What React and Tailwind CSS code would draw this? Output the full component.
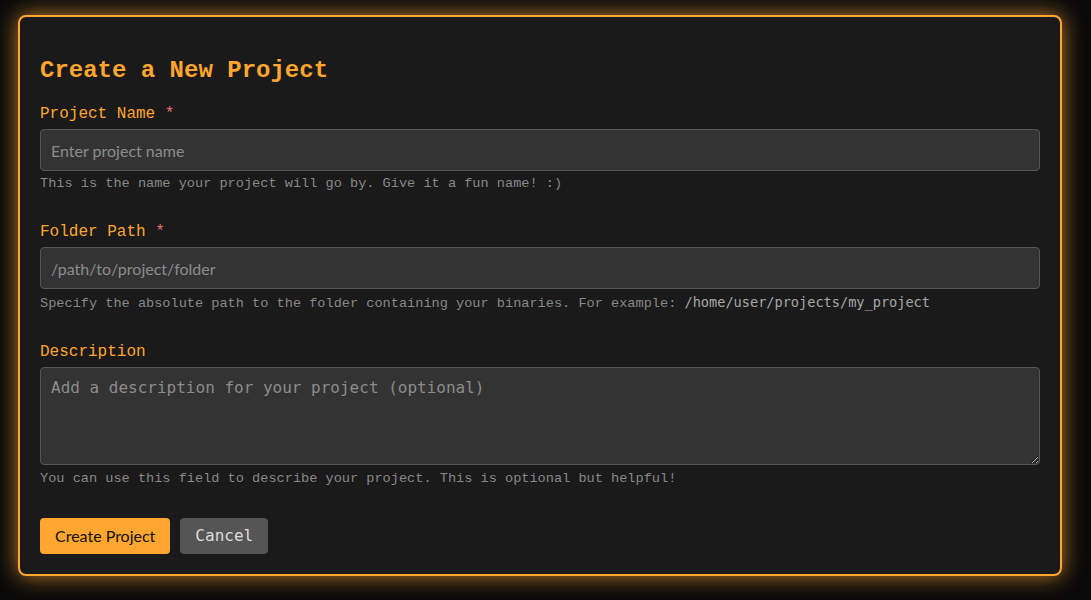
import React, { useState } from 'react';

const mono = "font-['Liberation_Mono',monospace]";
const dejavu = "font-['DejaVu_Sans_Mono',monospace]";

const Field = ({ label, required, children, hint, hintGap = 'mt-[5px]' }) => (
  <div className="mb-[31px]">
    <label className={`block ${mono} text-[16px] leading-[18px] text-[#ffa630] mb-[6px]`}>
      {label}
      {required && <span className="text-[#e57373]"> *</span>}
    </label>
    {children}
    <p className={`${mono} text-[13.6px] leading-[16px] text-[#888] ${hintGap}`}>{hint}</p>
  </div>
);

const App = () => {
  const [name, setName] = useState('');
  const [path, setPath] = useState('');
  const [desc, setDesc] = useState('');

  return (
    <div className="min-h-[600px] bg-[#0a0a0a] pt-[15px] pl-[18px]">
      <div className="w-[1044px] bg-[#1a1a1a] border-2 border-[#ffa630] rounded-[8px] px-[20px] pt-[20px] pb-[20px] shadow-[0_0_22px_rgba(255,166,48,0.75)]">
        <h2 className={`${mono} font-bold text-[24px] leading-[29px] text-[#ffa630] pt-[19px] mb-[20px]`}>
          Create a New Project
        </h2>

        <Field label="Project Name" required hint="This is the name your project will go by. Give it a fun name! :)">
          <input
            value={name}
            onChange={(e) => setName(e.target.value)}
            placeholder="Enter project name"
            className="block w-full h-[42px] px-[10px] bg-[#333] border border-[#555] rounded-[4px] text-[16px] text-[#ddd] placeholder:text-[#8c8c8c] font-['Lato',sans-serif] outline-none"
          />
        </Field>

        <Field
          label="Folder Path"
          required
          hint={
            <>
              Specify the absolute path to the folder containing your binaries. For example:{' '}
              <code className={`${dejavu} text-[13.6px] text-[#a8a8a8]`}>/home/user/projects/my_project</code>
            </>
          }
        >
          <input
            value={path}
            onChange={(e) => setPath(e.target.value)}
            placeholder="/path/to/project/folder"
            className="block w-full h-[42px] px-[10px] bg-[#333] border border-[#555] rounded-[4px] text-[16px] text-[#ddd] placeholder:text-[#8c8c8c] font-['Lato',sans-serif] outline-none"
          />
        </Field>

        <Field
          label="Description"
          hintGap="mt-[6px]"
          hint="You can use this field to describe your project. This is optional but helpful!"
        >
          <textarea
            value={desc}
            onChange={(e) => setDesc(e.target.value)}
            placeholder="Add a description for your project (optional)"
            className={`block w-full h-[98px] px-[10px] py-[10px] bg-[#333] border border-[#555] rounded-[4px] text-[16px] leading-[19px] text-[#ddd] placeholder:text-[#8c8c8c] ${dejavu} outline-none`}
          />
        </Field>

        <div className="flex gap-[10px]">
          <button className="h-[36px] px-[15px] rounded-[4px] bg-[#ffa630] text-[#111] text-[16px] font-['Lato',sans-serif]">
            Create Project
          </button>
          <button className={`h-[36px] px-[15px] rounded-[4px] bg-[#555] text-[#ddd] text-[16px] ${dejavu}`}>
            Cancel
          </button>
        </div>
      </div>
    </div>
  );
};

export default App;
